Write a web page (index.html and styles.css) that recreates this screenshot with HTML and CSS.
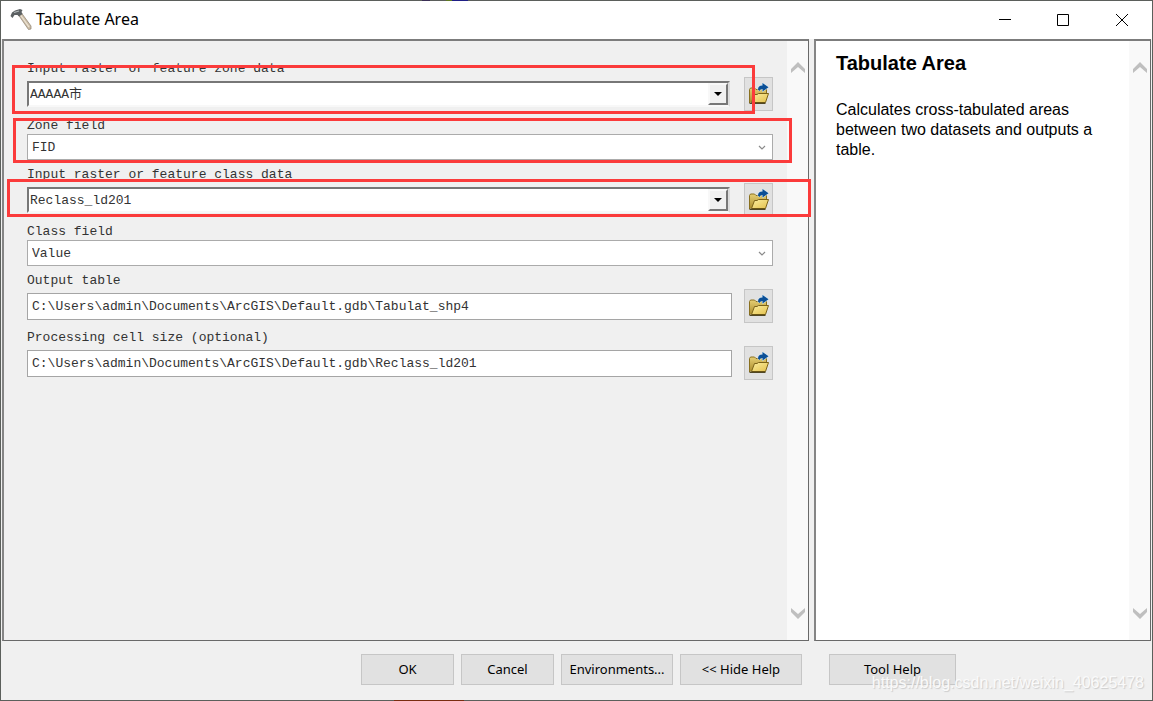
FILE: index.html
```html
<!DOCTYPE html>
<html lang="en">
<head>
<meta charset="utf-8">
<title>Tabulate Area</title>
<link rel="stylesheet" href="styles.css">
</head>
<body>
<svg class="defs" aria-hidden="true">
  <defs>
    <linearGradient id="gold" x1="0" y1="0" x2="1" y2="1"><stop offset="0" stop-color="#fbeea0"/><stop offset="1" stop-color="#e3c04c"/></linearGradient>
    <linearGradient id="back" x1="0" y1="0" x2="0" y2="1"><stop offset="0" stop-color="#e6cf74"/><stop offset="1" stop-color="#a98a2a"/></linearGradient>
    <symbol id="folder" viewBox="0 0 22 22">
      <path d="M1.500 20V6.500L2.500 5H6.500L8 6.500H18.500V11.500" fill="url(#back)" stroke="#8a701e"/>
      <path d="M6.500 11.500H9L10.500 10.500H20.500L17.500 19.500H3.500z" fill="url(#gold)" stroke="#7c6318"/>
      <path d="M1.500 20.300h16" stroke="#3f3510" stroke-width="1.200"/>
      <path d="M10 6.500Q10 2.500 14.500 2.500V0L20.500 4.300L14.500 8.500V6Q12.500 5.500 11.500 8z" fill="#0b4f96" stroke="#cfe8fa" stroke-width="1" paint-order="stroke"/>
    </symbol>
    <symbol id="chevron" viewBox="0 0 14 12"><path d="M0 7L7 0l7 7v4L7 5l-7 6z" fill="#bfbfbf"/></symbol>
    <symbol id="triangle" viewBox="0 0 8 4"><path d="M0 0h8L4 4z" fill="#000"/></symbol>
    <symbol id="tick" viewBox="0 0 8 5"><path d="M1 1l3 3 3-3" fill="none" stroke="#8a8a8a" stroke-width="1.200"/></symbol>
  </defs>
</svg>
<div class="window">
  <header class="titlebar">
    <svg class="hammer" viewBox="0 0 22 22" aria-hidden="true">
      <path d="M8.500 6l3-2L21 17v3l-2.500.500z" fill="#cdbfa9" stroke="#8c806e" stroke-width=".7"/>
      <path d="M10.500 6l8.500 12" stroke="#eee5d5" stroke-width="1.200"/>
      <path d="M.5 7L2 3.500l3-2L10 0l2.500 1-1 2 1 2-3.500 2.500L7.500 6 4.500 6 2.500 9z" fill="#5b6062"/>
      <path d="M4 3.500l5-1.500" stroke="#b2b8ba" stroke-width="1.200"/>
    </svg>
    <h1 class="title">Tabulate Area</h1>
    <div class="controls">
      <button class="control" aria-label="Minimize"><svg viewBox="0 0 12 12"><path d="M0 5.500h12"/></svg></button>
      <button class="control" aria-label="Maximize"><svg viewBox="0 0 12 12"><path d="M.5.500h11v11H.500z"/></svg></button>
      <button class="control" aria-label="Close"><svg viewBox="0 0 12 12"><path d="M0 0l12 12M12 0L0 12"/></svg></button>
    </div>
  </header>

  <main class="panes">
    <section class="pane pane-form">
      <form class="form" id="tool">
        <div class="field">
          <label for="zone-data">Input raster or feature zone data</label>
          <div class="row">
            <div class="combo classic">
              <select id="zone-data"><option>AAAAA市</option></select>
              <span class="drop"><svg><use href="#triangle"/></svg></span>
            </div>
            <button type="button" class="browse" aria-label="Browse zone data"><svg><use href="#folder"/></svg></button>
          </div>
          <div class="mark mark-zone-data"></div>
        </div>
        <div class="field">
          <label for="zone-field">Zone field</label>
          <div class="combo flat">
            <select id="zone-field"><option>FID</option></select>
            <svg><use href="#tick"/></svg>
          </div>
          <div class="mark mark-zone-field"></div>
        </div>
        <div class="field">
          <label for="class-data">Input raster or feature class data</label>
          <div class="row">
            <div class="combo classic">
              <select id="class-data"><option>Reclass_ld201</option></select>
              <span class="drop"><svg><use href="#triangle"/></svg></span>
            </div>
            <button type="button" class="browse" aria-label="Browse class data"><svg><use href="#folder"/></svg></button>
          </div>
          <div class="mark mark-class-data"></div>
        </div>
        <div class="field">
          <label for="class-field">Class field</label>
          <div class="combo flat">
            <select id="class-field"><option>Value</option></select>
            <svg><use href="#tick"/></svg>
          </div>
        </div>
        <div class="field">
          <label for="output">Output table</label>
          <div class="row">
            <input class="text" id="output" type="text" value="C:\Users\admin\Documents\ArcGIS\Default.gdb\Tabulat_shp4">
            <button type="button" class="browse" aria-label="Browse output table"><svg><use href="#folder"/></svg></button>
          </div>
        </div>
        <div class="field">
          <label for="cell">Processing cell size (optional)</label>
          <div class="row">
            <input class="text" id="cell" type="text" value="C:\Users\admin\Documents\ArcGIS\Default.gdb\Reclass_ld201">
            <button type="button" class="browse" aria-label="Browse cell size"><svg><use href="#folder"/></svg></button>
          </div>
        </div>
      </form>
      <div class="scroll"><svg><use href="#chevron"/></svg><svg class="down"><use href="#chevron"/></svg></div>
    </section>
    <aside class="pane pane-help">
      <div class="help">
        <h2>Tabulate Area</h2>
        <p>Calculates cross-tabulated areas between two datasets and outputs a table.</p>
      </div>
      <div class="scroll"><svg><use href="#chevron"/></svg><svg class="down"><use href="#chevron"/></svg></div>
    </aside>
  </main>

  <footer class="actions">
    <div class="main-actions">
      <button class="btn">OK</button>
      <button class="btn">Cancel</button>
      <button class="btn wide">Environments...</button>
      <button class="btn wider">&lt;&lt; Hide Help</button>
    </div>
    <div class="help-actions"><button class="btn widest">Tool Help</button></div>
    <span class="watermark">https://blog.csdn.net/weixin_40625478</span>
  </footer>
</div>
</body>
</html>
```

FILE: styles.css
```css
* { box-sizing: border-box; }

body {
  margin: 0;
  font-family: "Noto Sans", sans-serif;
  color: #000;
}

.defs { position: absolute; width: 0; height: 0; }

button, input, select { font: inherit; color: inherit; margin: 0; }

.window {
  display: flex;
  flex-direction: column;
  min-height: 100vh;
  border: 1px solid transparent;
  background:
    linear-gradient(#f0f0f0, #f0f0f0) padding-box,
    linear-gradient(90deg, transparent 422px, #3b2f55 422px 430px, transparent 430px 446px, #5f7a22 446px 452px, #1f1f85 452px 468px, transparent 468px) top / 100% 1px no-repeat border-box,
    linear-gradient(90deg, transparent 394px, #7a2c10 394px 464px, transparent 464px) bottom / 100% 1px no-repeat border-box,
    linear-gradient(#5b5f5b, #5b5f5b) border-box;
}

/* Title bar */
.titlebar {
  display: flex;
  align-items: center;
  height: 38px;
  padding-left: 9px;
  background: #fff;
}
.hammer { width: 22px; height: 22px; }
.title {
  flex: 1;
  margin: 0 0 2px 4px;
  font-size: 16px;
  line-height: 20px;
  font-weight: 400;
}
.controls { display: flex; }
.control {
  display: grid;
  place-items: center;
  width: 58px;
  height: 38px;
  padding: 0;
  border: 0;
  background: none;
}
.control:last-child { width: 60px; }
.control svg { width: 12px; height: 12px; fill: none; stroke: #000; }

/* Panes */
.panes {
  flex: 1;
  display: grid;
  grid-template-columns: minmax(0, 807fr) minmax(0, 337fr);
  gap: 5px;
  padding: 0 1px;
}
.pane {
  display: flex;
  border: 1px solid #696969;
  border-top: 2px solid #7c7c7c;
  border-left: 2px solid #858585;
}
.pane-help { background: #fff; }

.scroll {
  display: flex;
  flex-direction: column;
  justify-content: space-between;
  align-items: center;
  flex: none;
  width: 21px;
  padding: 21px 0;
  background: #f9f9f9;
}
.scroll svg { width: 14px; height: 12px; }
.scroll .down { transform: rotate(180deg); }

/* Tool form */
.form {
  flex: 1;
  display: flex;
  flex-direction: column;
  gap: 5px;
  padding: 18px 14px 0 23px;
  font-family: "Liberation Mono", "Noto Sans CJK SC", monospace;
  font-size: 13px;
  color: #333;
}
.field { position: relative; display: flex; flex-direction: column; }
.field label { height: 18px; line-height: 20px; }
.row {
  display: flex;
  align-items: center;
  gap: 12px;
  height: 34px;
}
.text {
  flex: 1;
  min-width: 0;
  height: 27px;
  padding: 0 4px;
  border: 1px solid #a5a5a5;
  background: #fff;
}
.combo {
  flex: 1;
  display: flex;
  align-items: center;
  background: #fff;
}
.combo select {
  flex: 1;
  min-width: 0;
  height: 100%;
  padding: 0;
  border: 0;
  background: none;
  appearance: none;
}
.flat {
  flex: none;
  height: 26px;
  padding: 0 6px 0 4px;
  border: 1px solid #ababab;
}
.flat svg { width: 8px; height: 5px; }
.classic {
  height: 26px;
  margin-right: 2px;
  padding-left: 1px;
  border: 2px solid;
  border-color: #777 #ddd #f8f8f8 #777;
}
.drop {
  display: grid;
  place-items: center;
  width: 20px;
  height: 22px;
  border: 2px solid;
  border-color: #f8f8f8 #777 #777 #f8f8f8;
  background: #f0f0f0;
}
.drop svg { width: 8px; height: 4px; }
.browse {
  display: grid;
  place-items: center;
  width: 29px;
  height: 34px;
  padding: 0;
  border: 1px solid #c6c6c6;
  background: #e1e1e1;
}
.browse svg { width: 22px; height: 22px; }

/* Red highlight frames */
.mark {
  position: absolute;
  z-index: 1;
  border: 3px solid #fb3b3b;
  pointer-events: none;
}
.mark-zone-data { inset: 6px 18px -3px -15px; }
.mark-zone-field { inset: 2px -19px -3px -14px; }
.mark-class-data { inset: 14px -38px 0 -20px; }

/* Help */
.help {
  flex: 1;
  padding: 10px 20px;
  font-family: "Liberation Sans", sans-serif;
}
.help h2 { margin: 0; font-size: 20px; line-height: 24px; }
.help p { margin: 25px 0 0; font-size: 16px; line-height: 20px; }

/* Buttons */
.actions {
  position: relative;
  display: grid;
  grid-template-columns: minmax(0, 807fr) minmax(0, 337fr);
  gap: 5px;
  padding: 13px 1px 15px;
  font-size: 13px;
}
.main-actions { display: flex; justify-content: flex-end; gap: 7px; padding-right: 7px; }
.help-actions { padding-left: 15px; }
.btn {
  width: 93px;
  height: 31px;
  padding: 0 0 2px;
  border: 1px solid #c6c6c6;
  background: #e1e1e1;
}
.wide { width: 112px; }
.wider { width: 122px; }
.widest { width: 127px; }
.watermark {
  position: absolute;
  right: 8px;
  bottom: 7px;
  font-family: "Liberation Sans", sans-serif;
  font-size: 16px;
  line-height: 20px;
  color: #fafafa;
  text-shadow: 1px 1px 1px #ccc;
}
```
